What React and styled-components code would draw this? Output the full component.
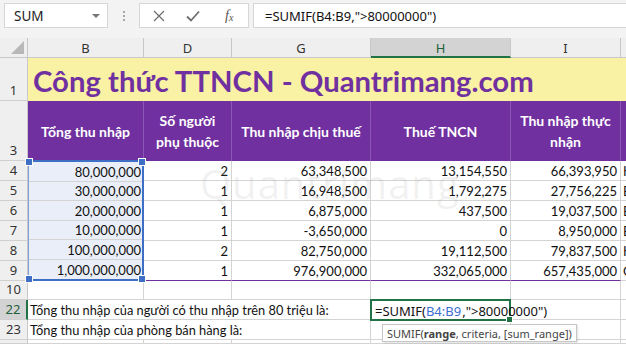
import React from 'react';
import styled, { createGlobalStyle } from 'styled-components';

const GlobalStyle = createGlobalStyle`
  html, body { margin: 0; padding: 0; background: #fff; }
  body { width: 626px; height: 344px; overflow: hidden; font-family: Lato, "Open Sans", sans-serif; }
`;

const Window = styled.div`
  width: 626px;
  height: 344px;
  overflow: hidden;
  display: flex;
  flex-direction: column;
  background: #fff;
`;

/* ---------- formula bar ---------- */
const FormulaBar = styled.div`
  height: 38px;
  flex: none;
  box-sizing: border-box;
  background: #f3f3f3;
  display: flex;
  align-items: flex-start;
  padding: 3px 0 0 4px;
`;

const NameBox = styled.div`
  width: 104px;
  height: 25px;
  box-sizing: border-box;
  background: #fff;
  border: 1px solid #d6d6d6;
  display: flex;
  align-items: center;
  justify-content: space-between;
  padding: 0 7px 0 9px;
  font: 13.5px "Noto Sans", sans-serif;
  color: #222;
`;

const DropArrow = styled.span`
  width: 0;
  height: 0;
  border-left: 4px solid transparent;
  border-right: 4px solid transparent;
  border-top: 4px solid #777;
`;

const Dots = styled.div`
  width: 31px;
  height: 25px;
  display: flex;
  flex-direction: column;
  align-items: center;
  justify-content: center;
  gap: 2px;
  span { width: 2px; height: 2px; background: #a8a8a8; }
`;

const ActionBox = styled.div`
  width: 110px;
  height: 25px;
  box-sizing: border-box;
  background: #fff;
  border: 1px solid #d6d6d6;
  display: flex;
  align-items: center;
  padding: 0 0 0 3px;
`;

const ActionIcon = styled.span`
  width: ${(p) => p.$w}px;
  display: flex;
  align-items: center;
  justify-content: center;
  color: #7a7a7a;
`;

const Fx = styled.span`
  font: italic 14px "Liberation Serif", serif;
  color: #555;
  sub { font-size: 10px; vertical-align: -1px; }
`;

const FormulaInput = styled.div`
  flex: 1;
  margin-left: 4px;
  height: 25px;
  box-sizing: border-box;
  background: #fff;
  border: 1px solid #d6d6d6;
  border-right: none;
  display: flex;
  align-items: center;
  padding-left: 11px;
  font: 13px "Noto Sans", sans-serif;
  color: #111;
`;

/* ---------- sheet ---------- */
const Sheet = styled.div`
  position: relative;
  flex: 1;
  display: grid;
  grid-template-columns: 28px 116px 88px 139px 140px 110px 1fr;
  grid-template-rows: 20px 43px 60px repeat(6, 20px) 19px 20px 20px 1fr;
  font-family: Lato, sans-serif;
  font-size: 13px;
  color: #111;
`;

const Corner = styled.div`
  background: #efefef;
  border-right: 1px solid #c8c8c8;
  border-bottom: 1px solid #c8c8c8;
  box-sizing: border-box;
  position: relative;
  &::after {
    content: '';
    position: absolute;
    right: 3px;
    bottom: 3px;
    border-left: 13px solid transparent;
    border-bottom: 13px solid #b8b8b8;
  }
`;

const ColHeader = styled.div`
  box-sizing: border-box;
  background: ${(p) => (p.$active ? '#d3d3d3' : '#efefef')};
  border-right: 1px solid #c8c8c8;
  border-bottom: ${(p) => (p.$active ? '2px solid #217346' : '1px solid #c8c8c8')};
  display: flex;
  align-items: center;
  justify-content: center;
  font: 13px "Noto Sans", sans-serif;
  color: ${(p) => (p.$active ? '#1e5e3a' : '#333')};
  padding-top: 1px;
`;

const RowHeader = styled.div`
  grid-column: 1;
  box-sizing: border-box;
  background: ${(p) => (p.$active ? '#d3d3d3' : '#efefef')};
  border-right: ${(p) => (p.$active ? '2px solid #217346' : '1px solid #c8c8c8')};
  border-bottom: 1px solid #d0d0d0;
  display: flex;
  align-items: flex-end;
  justify-content: center;
  padding-bottom: 1px;
  font: 13px "Noto Sans", sans-serif;
  color: ${(p) => (p.$active ? '#1e5e3a' : '#333')};
`;

const TitleCell = styled.div`
  grid-column: 2 / -1;
  background: #f9f1a3;
  display: flex;
  align-items: flex-end;
  padding: 0 0 3px 5px;
  font: 700 29.3px Lato, sans-serif;
  color: #7030a0;
  white-space: nowrap;
  overflow: hidden;
`;

const HeadCell = styled.div`
  box-sizing: border-box;
  background: #7030a0;
  border-right: 1px solid #8b57b5;
  display: flex;
  align-items: center;
  justify-content: center;
  text-align: center;
  font: 700 14px/21px Lato, sans-serif;
  color: #fff;
`;

const DataCell = styled.div`
  box-sizing: border-box;
  border-right: 1px solid #d4d4d4;
  border-bottom: ${(p) => (p.$last ? '1px solid #7030a0' : '1px solid #d4d4d4')};
  display: flex;
  align-items: center;
  justify-content: ${(p) => (p.$left ? 'flex-start' : 'flex-end')};
  padding: 1px 3px 0 2px;
  white-space: nowrap;
  overflow: hidden;
`;

const EmptyCell = styled.div`
  box-sizing: border-box;
  border-right: 1px solid #d4d4d4;
  border-bottom: 1px solid #d4d4d4;
`;

const RangeBlock = styled.div`
  grid-column: 2;
  grid-row: 4 / 10;
  position: relative;
  box-sizing: border-box;
  background: #e9eef8;
  border: 2px solid #3f6fc4;
  border-left: 1px solid #7f9fd6;
  display: grid;
  grid-template-rows: repeat(6, 1fr);
  margin-top: -1px;
`;

const RangeCell = styled.div`
  box-sizing: border-box;
  border-bottom: ${(p) => (p.$last ? 'none' : '1px solid #d4d4d4')};
  display: flex;
  align-items: center;
  justify-content: flex-end;
  padding: 1px 1px 0 0;
`;

const Handle = styled.span`
  position: absolute;
  width: 6px;
  height: 6px;
  background: #3f6fc4;
  border: 1px solid #fff;
  ${(p) => (p.$top ? 'top: -4px;' : 'bottom: -4px;')}
  ${(p) => (p.$leftSide ? 'left: -4px;' : 'right: -4px;')}
`;

const NoteCell = styled.div`
  grid-column: 2 / 5;
  box-sizing: border-box;
  border-right: 1px solid #d4d4d4;
  border-bottom: 1px solid #d4d4d4;
  display: flex;
  align-items: center;
  padding: 1px 0 0 2px;
  white-space: nowrap;
  font-size: 12.8px;
`;

const EditCell = styled.div`
  position: relative;
  box-sizing: border-box;
  border: 2px solid #217346;
  background: #fff;
  margin: -1px 0 -1px -1px;
  display: flex;
  align-items: center;
  padding: 1px 0 0 3px;
  white-space: nowrap;
  font: 13px "Noto Sans", sans-serif;
  z-index: 2;
`;

const RefText = styled.span`
  color: #3c6fcf;
`;

const Caret = styled.span`
  display: inline-block;
  width: 1px;
  height: 15px;
  background: #000;
  vertical-align: middle;
  margin: 0 0 0 1px;
`;

const FillHandle = styled.span`
  position: absolute;
  right: -4px;
  bottom: -4px;
  width: 5px;
  height: 5px;
  background: #217346;
  border: 1px solid #fff;
`;

const Tooltip = styled.div`
  position: absolute;
  left: 10px;
  top: 23px;
  padding: 0 4px;
  height: 16px;
  display: flex;
  align-items: center;
  background: #fff;
  border: 1px solid #c6c6c6;
  box-shadow: 1px 1px 2px rgba(0, 0, 0, 0.12);
  font: 11px "Noto Sans", sans-serif;
  color: #444;
  b { font-weight: 700; }
`;

const Watermark = styled.div`
  position: absolute;
  left: 200px;
  top: 118px;
  font: 400 40px "Open Sans", sans-serif;
  color: rgba(150, 150, 150, 0.13);
  pointer-events: none;
  letter-spacing: 1px;
`;

const rows = [
  { n: 4, b: '80,000,000', d: '2', g: '63,348,500', h: '13,154,550', i: '66,393,950', j: 'Kinh doanh' },
  { n: 5, b: '30,000,000', d: '1', g: '16,948,500', h: '1,792,275', i: '27,756,225', j: 'Bán hàng' },
  { n: 6, b: '20,000,000', d: '1', g: '6,875,000', h: '437,500', i: '19,037,500', j: 'Bán hàng' },
  { n: 7, b: '10,000,000', d: '1', g: '-3,650,000', h: '0', i: '8,950,000', j: 'Bán hàng' },
  { n: 8, b: '100,000,000', d: '2', g: '82,750,000', h: '19,112,500', i: '79,837,500', j: 'Kinh doanh' },
  { n: 9, b: '1,000,000,000', d: '1', g: '976,900,000', h: '332,065,000', i: '657,435,000', j: 'Chăm sóc' },
];

const XIcon = () => (
  <svg width="12" height="12" viewBox="0 0 12 12">
    <path d="M1 1 L11 11 M11 1 L1 11" stroke="#6f6f6f" strokeWidth="1.3" fill="none" />
  </svg>
);

const CheckIcon = () => (
  <svg width="14" height="12" viewBox="0 0 14 12">
    <path d="M1 6.5 L5 10.5 L13 1.5" stroke="#6f6f6f" strokeWidth="1.8" fill="none" />
  </svg>
);

export default function App() {
  return (
    <Window>
      <GlobalStyle />
      <FormulaBar>
        <NameBox>
          SUM
          <DropArrow />
        </NameBox>
        <Dots>
          <span />
          <span />
          <span />
        </Dots>
        <ActionBox>
          <ActionIcon $w={32}><XIcon /></ActionIcon>
          <ActionIcon $w={36}><CheckIcon /></ActionIcon>
          <ActionIcon $w={38}><Fx>f<sub>x</sub></Fx></ActionIcon>
        </ActionBox>
        <FormulaInput>=SUMIF(B4:B9,"&gt;80000000")</FormulaInput>
      </FormulaBar>

      <Sheet>
        <Corner />
        <ColHeader>B</ColHeader>
        <ColHeader>D</ColHeader>
        <ColHeader>G</ColHeader>
        <ColHeader $active>H</ColHeader>
        <ColHeader>I</ColHeader>
        <ColHeader />

        <RowHeader>1</RowHeader>
        <TitleCell>Công thức TTNCN - Quantrimang.com</TitleCell>

        <RowHeader>3</RowHeader>
        <HeadCell>Tổng thu nhập</HeadCell>
        <HeadCell>Số người<br />phụ thuộc</HeadCell>
        <HeadCell>Thu nhập chịu thuế</HeadCell>
        <HeadCell>Thuế TNCN</HeadCell>
        <HeadCell>Thu nhập thực<br />nhận</HeadCell>
        <HeadCell />

        <RangeBlock>
          {rows.map((r, k) => (
            <RangeCell key={r.n} $last={k === rows.length - 1}>{r.b}</RangeCell>
          ))}
          <Handle $top $leftSide />
          <Handle $top />
          <Handle $leftSide />
          <Handle />
        </RangeBlock>

        {rows.map((r, k) => {
          const last = k === rows.length - 1;
          const line = k + 4;
          return (
            <React.Fragment key={r.n}>
              <RowHeader style={{ gridRow: line }}>{r.n}</RowHeader>
              <DataCell style={{ gridRow: line, gridColumn: 3 }} $last={last}>{r.d}</DataCell>
              <DataCell style={{ gridRow: line, gridColumn: 4 }} $last={last}>{r.g}</DataCell>
              <DataCell style={{ gridRow: line, gridColumn: 5 }} $last={last}>{r.h}</DataCell>
              <DataCell style={{ gridRow: line, gridColumn: 6 }} $last={last}>{r.i}</DataCell>
              <DataCell style={{ gridRow: line, gridColumn: 7 }} $left>{r.j}</DataCell>
            </React.Fragment>
          );
        })}

        <RowHeader>10</RowHeader>
        <EmptyCell />
        <EmptyCell />
        <EmptyCell />
        <EmptyCell />
        <EmptyCell />
        <EmptyCell />

        <RowHeader $active>22</RowHeader>
        <NoteCell>Tổng thu nhập của người có thu nhập trên 80 triệu là:</NoteCell>
        <EditCell>
          =SUMIF(<RefText>B4:B9</RefText><Caret />,"&gt;80000000")
          <FillHandle />
          <Tooltip>SUMIF(<b>range</b>, criteria, [sum_range])</Tooltip>
        </EditCell>
        <EmptyCell />
        <EmptyCell />

        <RowHeader>23</RowHeader>
        <NoteCell>Tổng thu nhập của phòng bán hàng là:</NoteCell>
        <EmptyCell />
        <EmptyCell />
        <EmptyCell />

        <RowHeader />
        <EmptyCell />
        <EmptyCell />
        <EmptyCell />
        <EmptyCell />
        <EmptyCell />
        <EmptyCell />

        <Watermark>Quantrimang</Watermark>
      </Sheet>
    </Window>
  );
}
